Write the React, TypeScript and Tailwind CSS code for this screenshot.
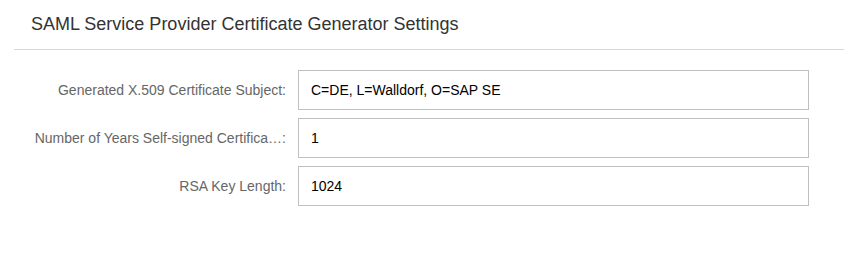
const rows = [
  { label: "Generated X.509 Certificate Subject:", value: "C=DE, L=Walldorf, O=SAP SE" },
  { label: "Number of Years Self-signed Certifica\u2026:", value: "1" },
  { label: "RSA Key Length:", value: "1024" },
];

export default function App() {
  return (
    <div className="w-[844px] h-[274px] bg-white font-['Liberation_Sans',Arial,sans-serif]">
      {/*---header---*/}
      <div className="ml-[14px] h-[50px] flex items-center pl-[17px] border-b border-[#d6d6d6]">
        <h2 className="text-[18px] text-[#333333]">SAML Service Provider Certificate Generator Settings</h2>
      </div>
      {/*---form---*/}
      <div className="pt-[20px] pl-[14px] flex flex-col gap-[8px]">
        {rows.map((row) => (
          <div key={row.label} className="flex items-center">
            <div className="w-[284px] shrink-0 pr-[12px] text-right text-[14px] text-[#666666] whitespace-nowrap">{row.label}</div>
            <div className="w-[511px] h-[40px] border border-[#bfbfbf] flex items-center pl-[12px] text-[14px] text-black">
              {row.value}
            </div>
          </div>
        ))}
      </div>
    </div>
  );
}
